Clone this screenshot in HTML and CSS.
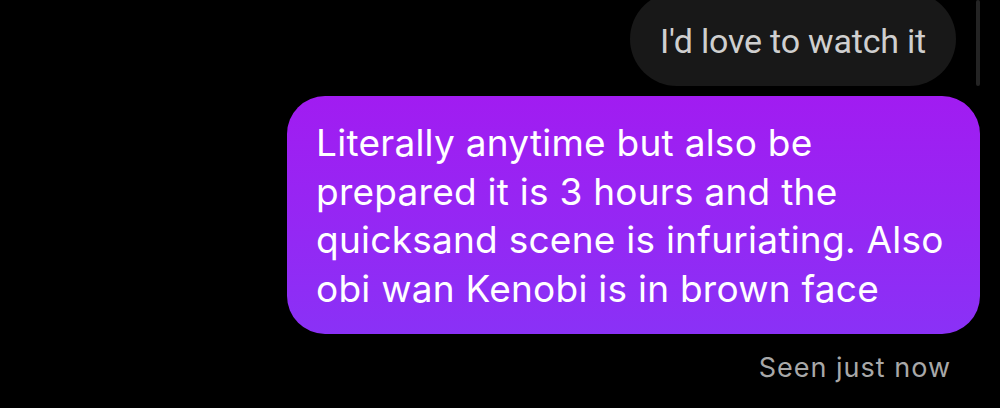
FILE: index.html
```html
<!DOCTYPE html>
<html lang="en">
<head>
  <meta charset="UTF-8" />
  <meta name="viewport" content="width=device-width, initial-scale=1.0"/>
  <title>Chat</title>
  <link rel="stylesheet" href="styles.css">
</head>
<body>
  <div class="thread">
    <div class="msg msg-in">I'd love to watch it</div>
    <div class="msg msg-out">Literally anytime but also be prepared it is 3 hours and the quicksand scene is infuriating. Also obi wan Kenobi is in brown face</div>
    <div class="seen">Seen just now</div>
  </div>
  <div class="scroll-thumb"></div>
</body>
</html>
```

FILE: styles.css
```css
body { margin: 0; background: #000; height: 408px; overflow: hidden; position: relative; font-family: Inter, "Noto Sans", sans-serif;}
.thread { display: flex; flex-direction: column; align-items: flex-end; margin-top: -8px; padding-right: 20px;}
.msg { box-sizing: border-box;}
.msg-in { font-family: Roboto, sans-serif; font-size: 34px; letter-spacing: -0.2px; line-height: 40px; color: #cfcfcf; background: #181818; padding: 29px 30px 25px; border-radius: 47px; margin-right: 24px;}
.msg-out { width: 693px; margin-top: 10px; font-size: 37px; letter-spacing: 0.25px; line-height: 48.5px; color: #fff; background: linear-gradient(to bottom, #a11cf1, #8a31f6); padding: 23px 20px 21px 29px; border-radius: 38px;}
.seen { margin-top: 19px; margin-right: 29px; font-size: 27px; letter-spacing: 1px; line-height: 30px; color: #a8a8a8;}
.scroll-thumb { position: absolute; top: 0; right: 20px; width: 4px; height: 86px; border-radius: 2px; background: #242424;}
```
